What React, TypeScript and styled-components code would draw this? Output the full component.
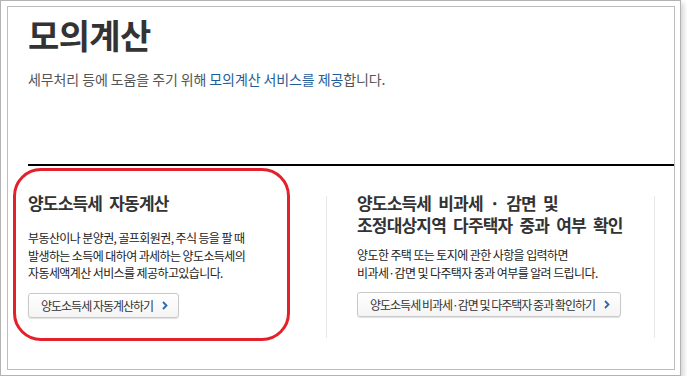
import React from "react";
import styled, { createGlobalStyle } from "styled-components";

const GlobalStyle = createGlobalStyle`
  html, body { margin: 0; padding: 0; background: #fff; }
  body { font-family: "Noto Sans CJK KR", "Noto Sans", sans-serif; }
  * { box-sizing: border-box; }
`;

const Frame = styled.div`
  width: 681px;
  height: 376px;
  border: 1px solid #b3b3b3;
  padding: 5px 5px 5px 6px;
  box-shadow: 3px 3px 5px rgba(0, 0, 0, 0.16);
  background: #fff;
`;

const Inner = styled.div`
  height: 100%;
  border: 1px solid #bdbdbd;
  padding: 8px 0 0 20px;
  position: relative;
`;

const Title = styled.h1`
  margin: 0;
  font-size: 34px;
  line-height: 40px;
  font-weight: 700;
  letter-spacing: -0.6px;
  color: #333;
`;

const Lead = styled.p`
  margin: 14px 0 0;
  font-size: 14px;
  line-height: 20px;
  color: #555;
  letter-spacing: -0.1px;
`;

const Link = styled.span`
  color: #1f5d99;
`;

const Rule = styled.hr`
  margin: 75px 0 0;
  border: 0;
  height: 2px;
  background: #000;
`;

const Cards = styled.div`
  display: grid;
  grid-template-columns: 298px 329px;
  margin-top: 30px;
  position: relative;
`;

const Card = styled.section<{ $bordered?: boolean }>`
  height: 142px;
  padding: ${(p) => (p.$bordered ? "0 0 0 30px" : "0")};
  border-left: ${(p) => (p.$bordered ? "1px solid #e8e8e8" : "0")};
  border-right: ${(p) => (p.$bordered ? "1px solid #e8e8e8" : "0")};
`;

const CardTitle = styled.h2`
  margin: -4px 0 0;
  font-size: 17px;
  line-height: 22px;
  font-weight: 700;
  letter-spacing: -0.8px;
  word-spacing: 4px;
  color: #333;
  white-space: nowrap;
`;

const CardText = styled.p<{ $gap: number }>`
  margin: ${(p) => p.$gap}px 0 0;
  font-size: 12px;
  line-height: 17.5px;
  color: #222;
  letter-spacing: -0.6px;
  white-space: nowrap;
`;

const Button = styled.button`
  margin-top: 11px;
  height: 25px;
  display: inline-flex;
  align-items: center;
  gap: 9px;
  padding: 0 10px 0 12px;
  border: 1px solid #c9c9c9;
  border-radius: 3px;
  background: linear-gradient(#ffffff, #f4f4f4);
  box-shadow: 0 1px 1px rgba(0, 0, 0, 0.12);
  font-family: inherit;
  font-size: 12px;
  letter-spacing: -1px;
  color: #333;
  cursor: pointer;
`;

const Highlight = styled.div`
  position: absolute;
  left: -15px;
  top: -28px;
  width: 277px;
  height: 173px;
  border: 3px solid #e3202b;
  border-radius: 28px;
  pointer-events: none;
`;

const Chevron = () => (
  <svg width="6" height="9" viewBox="0 0 6 9">
    <polyline points="1,1 4.5,4.5 1,8" fill="none" stroke="#2c67b1" strokeWidth="1.8" />
  </svg>
);

export default function App() {
  return (
    <>
      <GlobalStyle />
      <Frame>
        <Inner>
          <Title>모의계산</Title>
          <Lead>
            세무처리 등에 도움을 주기 위해 <Link>모의계산 서비스를 제공</Link>합니다.
          </Lead>
          <Rule />
          <Cards>
            <Highlight />
            <Card>
              <CardTitle>양도소득세 자동계산</CardTitle>
              <CardText $gap={15}>
                부동산이나 분양권, 골프회원권, 주식 등을 팔 때
                <br />
                발생하는 소득에 대하여 과세하는 양도소득세의
                <br />
                자동세액계산 서비스를 제공하고있습니다.
              </CardText>
              <Button>
                양도소득세 자동계산하기
                <Chevron />
              </Button>
            </Card>
            <Card $bordered>
              <CardTitle>
                양도소득세 비과세 · 감면 및
                <br />
                조정대상지역 다주택자 중과 여부 확인
              </CardTitle>
              <CardText $gap={10}>
                양도한 주택 또는 토지에 관한 사항을 입력하면
                <br />
                비과세·감면 및 다주택자 중과 여부를 알려 드립니다.
              </CardText>
              <Button>
                양도소득세 비과세·감면 및 다주택자 중과 확인하기
                <Chevron />
              </Button>
            </Card>
          </Cards>
        </Inner>
      </Frame>
    </>
  );
}
